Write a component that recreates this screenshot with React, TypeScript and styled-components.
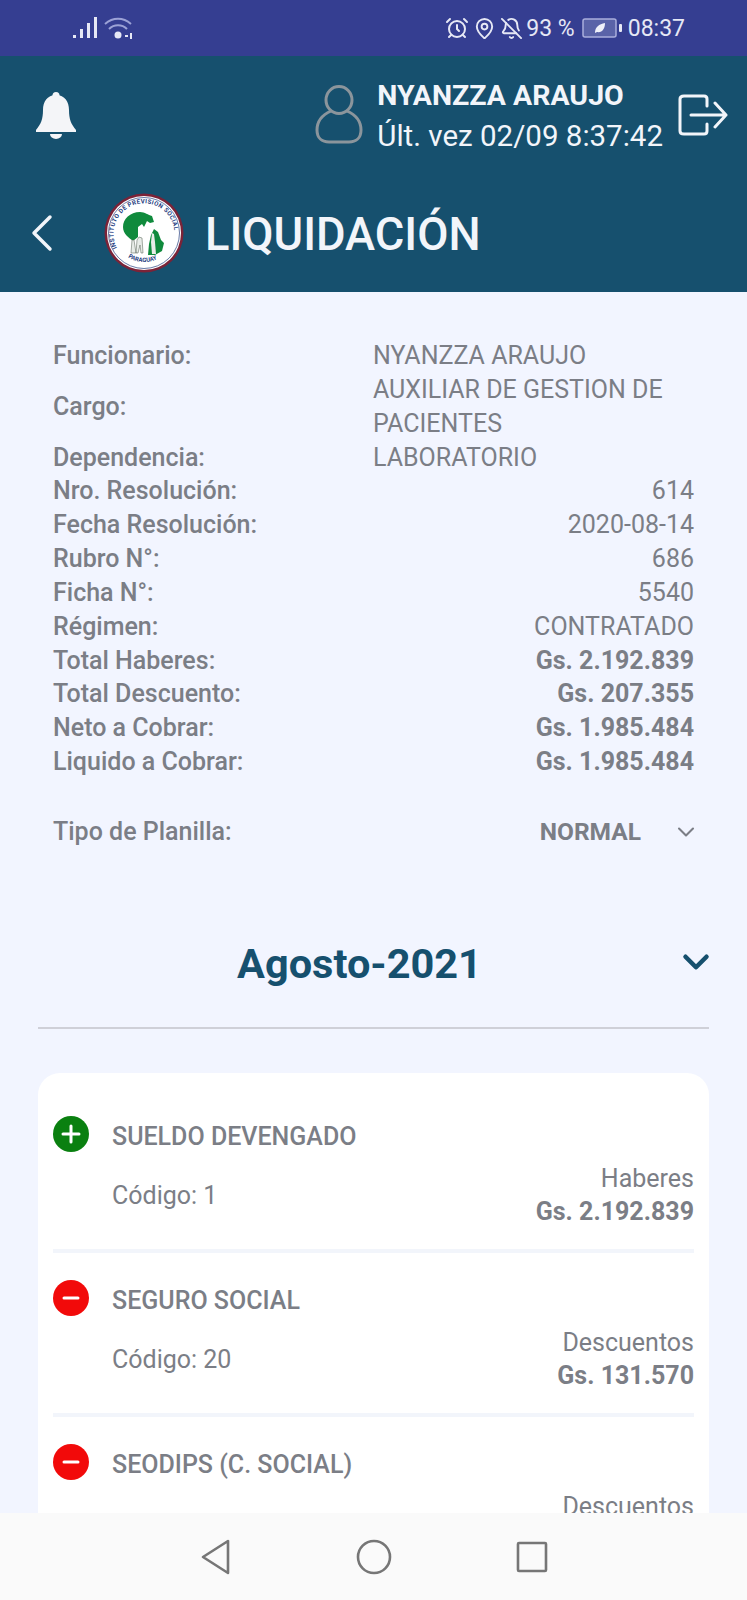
import { AlarmClock, BellOff, ChevronDown, ChevronLeft, MapPin } from 'lucide-react';
import styled, { createGlobalStyle } from 'styled-components';

const GlobalStyle = createGlobalStyle`
  html, body {
    margin: 0;
    padding: 0;
  }
  body {
    font-family: Roboto, "Liberation Sans", sans-serif;
    background: #f2f5ff;
  }
`;

const Screen = styled.div`
  width: 747px;
  height: 1600px;
  display: flex;
  flex-direction: column;
  overflow: hidden;
`;

const StatusBar = styled.div`
  height: 56px;
  flex: none;
  background: #353e91;
  color: #e6e8f5;
  display: flex;
  align-items: center;
  justify-content: space-between;
  padding: 0 62px 0 73px;
`;

const StatusGroup = styled.div`
  display: flex;
  align-items: center;
  gap: 4px;
  font-size: 23px;
`;

const Percent = styled.span`
  margin: 0 3px 0 -1px;
`;

const Clock = styled.span`
  margin-left: 2px;
`;

const Header = styled.header`
  height: 236px;
  flex: none;
  background: #16506e;
  color: #f2f5fa;
  display: flex;
  flex-direction: column;
`;

const HeaderTop = styled.div`
  height: 118px;
  padding: 0 19px 0 35px;
  display: flex;
  align-items: center;
  justify-content: space-between;
`;

const UserBlock = styled.div`
  display: flex;
  align-items: center;
`;

const UserText = styled.div`
  margin-left: 14px;
  margin-right: 15px;
  display: flex;
  flex-direction: column;
  gap: 8px;
  padding-top: 2px;
`;

const UserName = styled.div`
  font-size: 28.5px;
  font-weight: 700;
  line-height: 32px;
`;

const LastSeen = styled.div`
  font-size: 29.5px;
  line-height: 32px;
`;

const HeaderBottom = styled.div`
  display: flex;
  align-items: center;
  padding-left: 10px;
  margin-top: 19px;
`;

const LogoWrap = styled.div`
  margin-left: 30px;
  line-height: 0;
`;

const Title = styled.h1`
  margin: 0 0 0 21px;
  padding-top: 4px;
  font-size: 45.3px;
  font-weight: 500;
  line-height: 54px;
`;

const Main = styled.main`
  flex: 1;
  min-height: 0;
  overflow: hidden;
  padding: 47px 38px 0;
`;

const InfoList = styled.div`
  padding: 0 15px;
  display: grid;
  grid-template-columns: 320px 1fr;
  font-size: 25px;
  line-height: 33.85px;
  color: #7b7e86;
`;

const Label = styled.div`
  font-weight: 500;
  align-self: center;
`;

const Value = styled.div<{ $right?: boolean; $bold?: boolean }>`
  text-align: ${({ $right }) => ($right ? 'right' : 'left')};
  font-weight: ${({ $bold }) => ($bold ? 700 : 400)};
`;

const PlanillaRow = styled.div`
  margin-top: 36px;
  padding: 0 15px;
  display: flex;
  align-items: center;
  justify-content: space-between;
  font-size: 25px;
  line-height: 34px;
  color: #7b7e86;
`;

const PlanillaSelect = styled.div`
  display: flex;
  align-items: center;
  gap: 31px;
  margin-right: -6px;
  font-size: 24.5px;
  font-weight: 700;
`;

const MonthRow = styled.div`
  position: relative;
  margin-top: 90px;
  padding: 0 28px 38px 0;
  border-bottom: 2px solid #cfd0d8;
  text-align: center;
  color: #16506e;
  font-size: 41.5px;
  font-weight: 700;
  line-height: 50px;
`;

const MonthChevron = styled.span`
  position: absolute;
  right: -8px;
  top: 2px;
  line-height: 0;
`;

const Card = styled.section`
  margin-top: 44px;
  padding: 16px 15px 0;
  background: #fff;
  border-radius: 22px;
`;

const Item = styled.article<{ $last?: boolean }>`
  height: 164px;
  box-sizing: border-box;
  border-bottom: ${({ $last }) => ($last ? 'none' : '4px solid #f2f5fb')};
  padding-top: 27px;
  display: grid;
  grid-template-columns: 59px 1fr auto;
  grid-template-rows: 42px auto;
  color: #7b7e86;
`;

const Badge = styled.div<{ $color: string }>`
  width: 36px;
  height: 36px;
  border-radius: 50%;
  background: ${({ $color }) => $color};
  display: flex;
  align-items: center;
  justify-content: center;
  line-height: 0;
`;

const ItemTitle = styled.div`
  grid-column: 2 / 4;
  font-size: 25px;
  font-weight: 500;
  line-height: 42px;
`;

const Code = styled.div`
  grid-column: 2;
  align-self: start;
  margin-top: 23px;
  font-size: 25px;
  line-height: 30px;
`;

const Amounts = styled.div`
  grid-column: 3;
  margin-top: 4px;
  text-align: right;
  font-size: 25px;
  line-height: 33px;
`;

const Amount = styled.div`
  font-weight: 700;
`;

const NavBar = styled.nav`
  height: 87px;
  flex: none;
  background: #fafafa;
  display: flex;
  align-items: center;
  justify-content: center;
  gap: 124px;
`;

const items = [
  { title: 'SUELDO DEVENGADO', code: 1, kind: 'Haberes', amount: 'Gs. 2.192.839', plus: true },
  { title: 'SEGURO SOCIAL', code: 20, kind: 'Descuentos', amount: 'Gs. 131.570', plus: false },
  { title: 'SEODIPS (C. SOCIAL)', code: 30, kind: 'Descuentos', amount: 'Gs. 75.785', plus: false },
];

function Signal() {
  return (
    <svg width="66" height="24" viewBox="0 0 66 24">
      <g fill="#e6e8f5">
        <rect x="0" y="19" width="3" height="3" />
        <rect x="7" y="13" width="3" height="9" />
        <rect x="14" y="7" width="3" height="15" />
        <rect x="21" y="1" width="3" height="21" />
      </g>
      <g fill="none" stroke="#9ca2d6" strokeWidth="2">
        <path d="M32 8c8-7 18-7 26 0" />
        <path d="M36 13c5-5 13-5 18 0" />
      </g>
      <circle cx="45" cy="19" r="3.5" fill="#e6e8f5" />
      <path d="M52 20h3M58 17v6" stroke="#e6e8f5" strokeWidth="2" />
    </svg>
  );
}

function Battery() {
  return (
    <svg width="40" height="20" viewBox="0 0 40 20">
      <rect x="1" y="1" width="33" height="18" rx="2" fill="#5a63a8" stroke="#a9aedb" strokeWidth="1.5" />
      <rect x="37" y="6" width="3" height="8" rx="1" fill="#e6e8f5" />
      <path d="M13 15c0-6 4-9 10-10 0 6-3 10-8 9z" fill="#f0f1fa" />
    </svg>
  );
}

function Bell() {
  return (
    <svg width="42" height="48" viewBox="0 0 42 48" fill="#f4f5f8">
      <circle cx="21" cy="4.5" r="3.5" />
      <path d="M21 4c9 0 13 7 13 15 0 9 2 14 7 20v2H1v-2c5-6 7-11 7-20C8 11 12 4 21 4z" />
      <path d="M15 43h12a6 5 0 0 1-12 0z" />
    </svg>
  );
}

function UserOutline() {
  return (
    <svg width="48" height="60" viewBox="0 0 48 60" fill="none" stroke="#8b959c" strokeWidth="3">
      <ellipse cx="24" cy="15" rx="13" ry="13.5" />
      <path d="M16 26C7 30 2 36 2 45c0 8 5 12 12 12h20c7 0 12-4 12-12 0-9-5-15-14-19" />
    </svg>
  );
}

function Logout() {
  return (
    <svg width="50" height="42" viewBox="0 0 50 42" fill="none" stroke="#f2f5fa" strokeWidth="3" strokeLinecap="round" strokeLinejoin="round">
      <path d="M29 12V5c0-2-1-3-3-3H6C3 2 2 3 2 5v32c0 2 1 3 4 3h20c2 0 3-1 3-3v-7" />
      <path d="M13 21h35M37 9l11 12-11 12" />
    </svg>
  );
}

function Logo() {
  return (
    <svg width="80" height="80" viewBox="0 0 80 80">
      <circle cx="40" cy="40" r="39.5" fill="#7b2338" />
      <circle cx="40" cy="40" r="37" fill="#fff" />
      <circle cx="40" cy="40" r="35.5" fill="none" stroke="#26407f" strokeWidth="0.7" />
      <path d="M19 34c0-8 7-15 17-15 5 0 8 3 12 4l2 6-4 1-3-2-3 6-2-3-4 3v10l-5 4c-4-3-10-7-10-14z" fill="#0f8a3c" />
      <path d="M50 36l4 3 3 8 3 3-2 8-7 4-7 0 1-11 2-9z" fill="#0f8a3c" />
      <path d="M35 44l3 1 1 15h-2l-1-8-2 8h-2l1-13zM28 47h2l2 13h-5z" fill="#e8ece8" stroke="#4c5a4c" strokeWidth="0.5" />
      <path d="M48 40l2 1 1 8 1 12h-4l-1-12z" fill="#e8ece8" />
      <defs>
        <path id="seal-top" d="M13 55a30.5 30.5 0 1 1 54 0" />
        <path id="seal-bottom" d="M18 59a29 29 0 0 0 44 0" />
      </defs>
      <text fontFamily="Roboto, sans-serif" fontSize="6.2" fontWeight="700" fill="#26407f" letterSpacing="0.35">
        <textPath href="#seal-top">INSTITUTO DE PREVISION SOCIAL</textPath>
      </text>
      <text fontFamily="Roboto, sans-serif" fontSize="6" fontWeight="700" fill="#26407f">
        <textPath href="#seal-bottom" startOffset="16%">PARAGUAY</textPath>
      </text>
    </svg>
  );
}

function ItemBadge({ plus }: { plus: boolean }) {
  return (
    <Badge $color={plus ? '#0a8010' : '#f20a0a'}>
      <svg width="20" height="20" viewBox="0 0 20 20" stroke="#fff" strokeWidth="3" strokeLinecap="round">
        {plus ? <path d="M10 2v16M2 10h16" /> : <path d="M3 10h14" />}
      </svg>
    </Badge>
  );
}

export default function App() {
  return (
    <Screen>
      <GlobalStyle />
      <StatusBar>
        <Signal />
        <StatusGroup>
          <AlarmClock size={24} strokeWidth={2} />
          <MapPin size={23} strokeWidth={2} />
          <BellOff size={23} strokeWidth={2} />
          <Percent>93 %</Percent>
          <Battery />
          <Clock>08:37</Clock>
        </StatusGroup>
      </StatusBar>
      <Header>
        <HeaderTop>
          <Bell />
          <UserBlock>
            <UserOutline />
            <UserText>
              <UserName>NYANZZA ARAUJO</UserName>
              <LastSeen>Últ. vez 02/09 8:37:42</LastSeen>
            </UserText>
            <Logout />
          </UserBlock>
        </HeaderTop>
        <HeaderBottom>
          <ChevronLeft size={64} strokeWidth={1.3} />
          <LogoWrap>
            <Logo />
          </LogoWrap>
          <Title>LIQUIDACIÓN</Title>
        </HeaderBottom>
      </Header>
      <Main>
        <InfoList>
          <Label>Funcionario:</Label>
          <Value>NYANZZA ARAUJO</Value>
          <Label>Cargo:</Label>
          <Value>AUXILIAR DE GESTION DE PACIENTES</Value>
          <Label>Dependencia:</Label>
          <Value>LABORATORIO</Value>
          <Label>Nro. Resolución:</Label>
          <Value $right>614</Value>
          <Label>Fecha Resolución:</Label>
          <Value $right>2020-08-14</Value>
          <Label>Rubro N°:</Label>
          <Value $right>686</Value>
          <Label>Ficha N°:</Label>
          <Value $right>5540</Value>
          <Label>Régimen:</Label>
          <Value $right>CONTRATADO</Value>
          <Label>Total Haberes:</Label>
          <Value $right $bold>Gs. 2.192.839</Value>
          <Label>Total Descuento:</Label>
          <Value $right $bold>Gs. 207.355</Value>
          <Label>Neto a Cobrar:</Label>
          <Value $right $bold>Gs. 1.985.484</Value>
          <Label>Liquido a Cobrar:</Label>
          <Value $right $bold>Gs. 1.985.484</Value>
        </InfoList>
        <PlanillaRow>
          <Label>Tipo de Planilla:</Label>
          <PlanillaSelect>
            NORMAL
            <ChevronDown size={28} strokeWidth={1.8} />
          </PlanillaSelect>
        </PlanillaRow>
        <MonthRow>
          Agosto-2021
          <MonthChevron>
            <ChevronDown size={42} strokeWidth={2.6} />
          </MonthChevron>
        </MonthRow>
        <Card>
          {items.map((item, i) => (
            <Item key={item.title} $last={i === items.length - 1}>
              <ItemBadge plus={item.plus} />
              <ItemTitle>{item.title}</ItemTitle>
              <span />
              <Code>Código: {item.code}</Code>
              <Amounts>
                {item.kind}
                <Amount>{item.amount}</Amount>
              </Amounts>
            </Item>
          ))}
        </Card>
      </Main>
      <NavBar>
        <svg width="32" height="36" viewBox="2 0 32 36" fill="none" stroke="#767676" strokeWidth="2.6" strokeLinejoin="round">
          <path d="M30 2v32L5 18z" />
        </svg>
        <svg width="36" height="36" viewBox="0 0 36 36" fill="none" stroke="#767676" strokeWidth="2.6">
          <circle cx="18" cy="18" r="16" />
        </svg>
        <svg width="32" height="32" viewBox="0 0 32 32" fill="none" stroke="#767676" strokeWidth="2.6" strokeLinejoin="round">
          <rect x="2" y="2" width="28" height="28" rx="1" />
        </svg>
      </NavBar>
    </Screen>
  );
}
